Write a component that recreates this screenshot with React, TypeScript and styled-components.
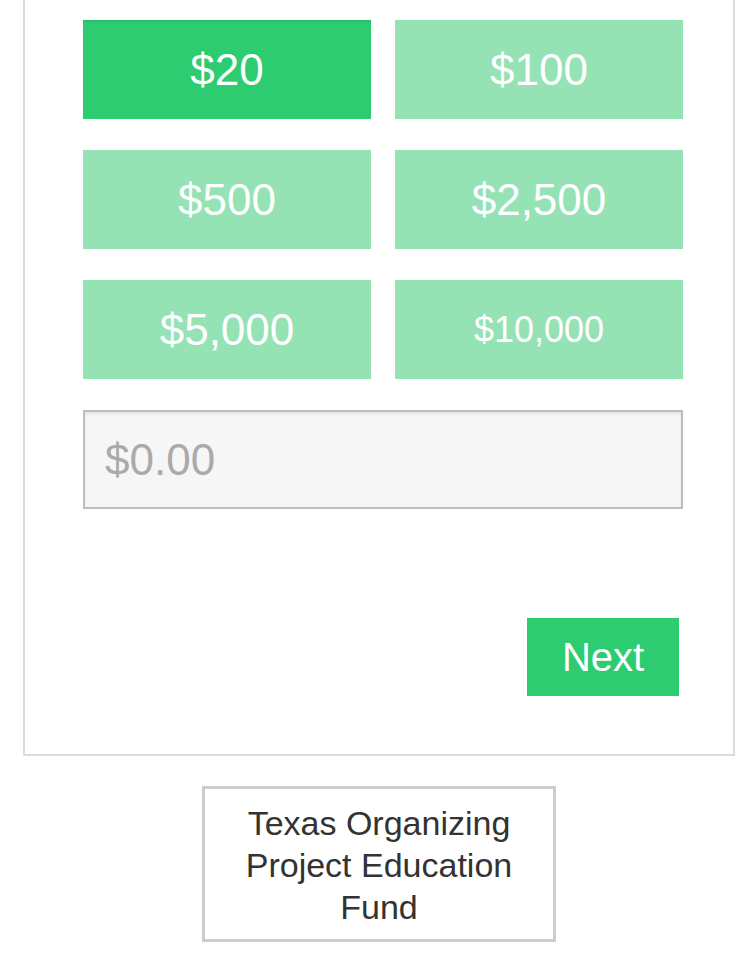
import { useState } from 'react';
import styled, { createGlobalStyle } from 'styled-components';

const GlobalStyle = createGlobalStyle`
  body {
    margin: 0;
    background: #fff;
    font-family: 'Liberation Sans', Arial, sans-serif;
  }
`;

const Page = styled.div`
  width: 750px;
  padding-bottom: 29px;
`;

const Card = styled.section`
  margin-left: 23px;
  width: 712px;
  box-sizing: border-box;
  border: 2px solid #dcdcdc;
  border-top: none;
  padding: 20px 50px 58px 58px;
`;

const AmountGrid = styled.div`
  display: grid;
  grid-template-columns: 288px 288px;
  grid-auto-rows: 99px;
  column-gap: 24px;
  row-gap: 31px;
`;

const AmountButton = styled.button<{ $active: boolean; $small?: boolean }>`
  border: none;
  margin: 0;
  padding: 0;
  background: ${(p) => (p.$active ? '#2ecc71' : '#95e2b5')};
  box-shadow: ${(p) => (p.$active ? 'inset 0 2px 2px rgba(0,0,0,0.08)' : 'none')};
  color: #fff;
  font-family: inherit;
  font-size: ${(p) => (p.$small ? '36px' : '44px')};
  cursor: pointer;
`;

const AmountInput = styled.input`
  display: block;
  margin-top: 31px;
  width: 600px;
  height: 99px;
  box-sizing: border-box;
  border: 2px solid #bdbdbd;
  background: #f6f6f6;
  box-shadow: inset 0 2px 3px rgba(0, 0, 0, 0.08);
  padding: 0 20px;
  font-family: inherit;
  font-size: 44px;
  color: #333;
  outline: none;
  &::placeholder {
    color: #aaa;
  }
`;

const Actions = styled.div`
  display: flex;
  justify-content: flex-end;
  margin-top: 109px;
  padding-right: 4px;
`;

const NextButton = styled.button`
  width: 152px;
  height: 78px;
  border: none;
  background: #2ecc71;
  color: #fff;
  font-family: inherit;
  font-size: 40px;
  padding: 0;
  cursor: pointer;
`;

const OrgBox = styled.div`
  margin: 30px 0 0 202px;
  width: 354px;
  height: 156px;
  box-sizing: border-box;
  border: 3px solid #cccccc;
  display: flex;
  align-items: center;
  justify-content: center;
  text-align: center;
  color: #333;
  font-size: 34px;
  line-height: 42px;
  padding: 2px 16px 0;
`;

const amounts = [
  { label: '$20' },
  { label: '$100' },
  { label: '$500' },
  { label: '$2,500' },
  { label: '$5,000' },
  { label: '$10,000', small: true },
];

function App() {
  const [selected, setSelected] = useState('$20');

  return (
    <Page>
      <GlobalStyle />
      <Card>
        <AmountGrid>
          {amounts.map((a) => (
            <AmountButton
              key={a.label}
              type='button'
              $active={selected === a.label}
              $small={a.small}
              onClick={() => setSelected(a.label)}
            >
              {a.label}
            </AmountButton>
          ))}
        </AmountGrid>
        <AmountInput type='text' placeholder='$0.00' />
        <Actions>
          <NextButton type='button'>Next</NextButton>
        </Actions>
      </Card>
      <OrgBox>Texas Organizing Project Education Fund</OrgBox>
    </Page>
  );
}

export default App;
